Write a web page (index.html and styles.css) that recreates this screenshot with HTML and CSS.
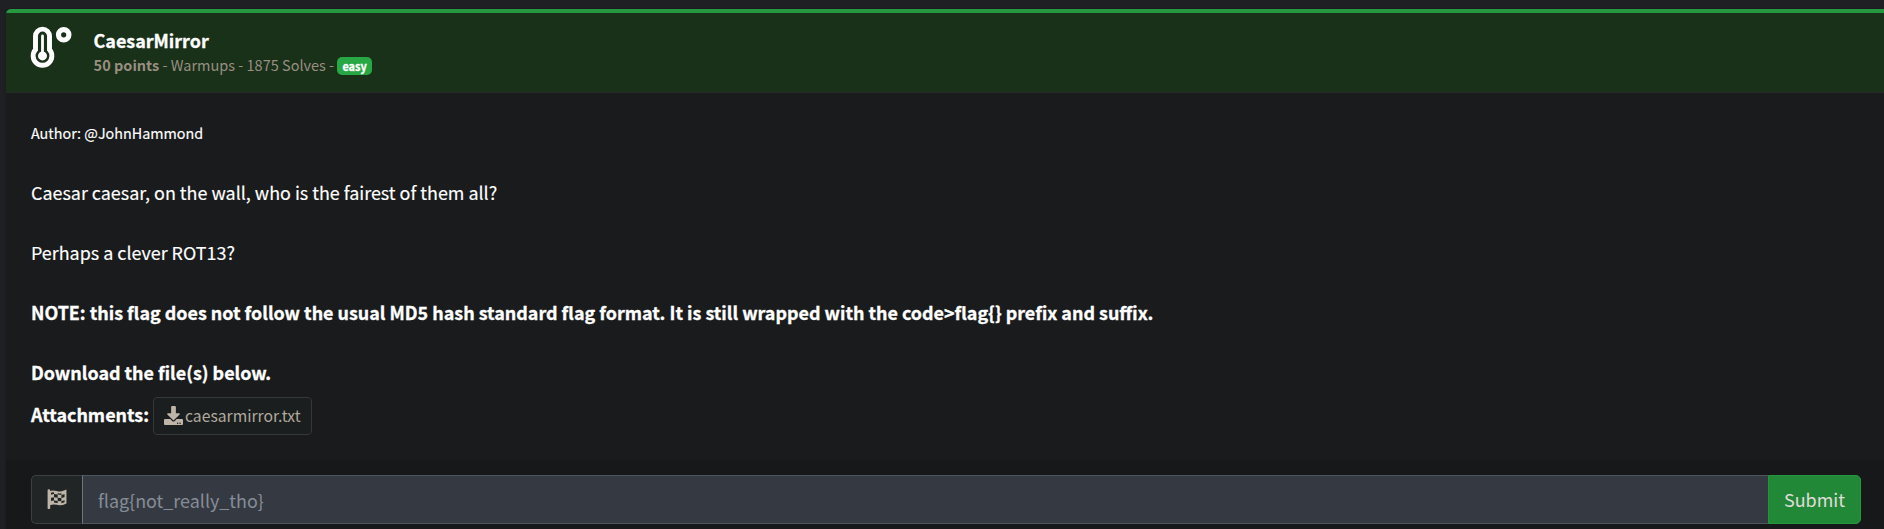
FILE: index.html
```html
<!DOCTYPE html>
<html lang="en">
<head>
<meta charset="utf-8">
<title>CaesarMirror</title>
<link rel="stylesheet" href="styles.css">
</head>
<body>
<main class="card">
  <header class="card-header">
    <svg class="thermo" viewBox="0 0 42 42" aria-hidden="true">
      <path d="M5.500 23.700V10.100a7 7 0 0 1 14 0V23.700a9.350 9.350 0 1 1-14 0z" fill="none" stroke="#fff" stroke-width="4.900"/>
      <path d="M12.500 10v20" stroke="#fff" stroke-width="2.800" stroke-linecap="round"/>
      <circle cx="12.500" cy="29.900" r="4.500" fill="#fff"/>
      <circle cx="33.700" cy="8.800" r="5.200" fill="none" stroke="#fff" stroke-width="5.200"/>
    </svg>
    <div class="heading">
      <h1 class="title">CaesarMirror</h1>
      <p class="meta"><b>50 points</b> - Warmups - 1875 Solves - <span class="badge">easy</span></p>
    </div>
  </header>
  <section class="card-body">
    <p class="author">Author: @JohnHammond</p>
    <p class="text">Caesar caesar, on the wall, who is the fairest of them all?</p>
    <p class="text">Perhaps a clever ROT13?</p>
    <p class="text strong">NOTE: this flag does not follow the usual MD5 hash standard flag format. It is still wrapped with the code&gt;flag{} prefix and suffix.</p>
    <p class="text strong last">Download the file(s) below.</p>
    <div class="attachments">
      <span class="strong label">Attachments:</span>
      <a class="file">
        <svg class="download" viewBox="0 0 512 512" aria-hidden="true"><path fill="currentColor" fill-rule="evenodd" d="M216 0h80c13 0 24 11 24 24v168h88c18 0 27 21 14 34L270 378c-7 7-20 7-28 0L90 226c-13-13-4-34 14-34h88V24c0-13 11-24 24-24zm296 376v112c0 13-11 24-24 24H24c-13 0-24-11-24-24V376c0-13 11-24 24-24h147l49 49c20 20 52 20 72 0l49-49h147c13 0 24 11 24 24zM388 464a20 20 0 1 0-40 0 20 20 0 0 0 40 0zm64 0a20 20 0 1 0-40 0 20 20 0 0 0 40 0z"/></svg>
        <span>caesarmirror.txt</span>
      </a>
    </div>
  </section>
  <footer class="card-footer">
    <div class="prepend">
      <svg class="flag" viewBox="0 0 20 20" aria-hidden="true">
        <path d="M1.900 1.500V19" stroke="currentColor" stroke-width="2.600" stroke-linecap="round"/>
        <path d="M3 3.100C7 .8 9.600 3.800 13 3.500c2.200-.2 3.800-1 5.500-1.700v12c-2.200 1.100-4 1.700-6 1.500-3.200-.4-5.500-1.900-9.500-.1z" fill="none" stroke="currentColor" stroke-width="1.900"/>
        <path fill="currentColor" d="M3.500 5.800l3.500-.8v3.200l-3.500.8zM7 8.200l3.700.6v3.200L7 11.400zM10.700 5.600l3.700.3v3.200l-3.700-.3zM14.400 9.100l3.800-1.200v3.200l-3.800 1.200zM3.500 12.100l3.500-.7v2.900l-3.500.7zM10.700 12l3.700.3v3l-3.700-.4zM7 2.500l3.700.5v2.600L7 5zM14.400 3.500l3.700-1v2.400l-3.700 1z"/>
      </svg>
    </div>
    <input class="answer" type="text" placeholder="flag{not_really_tho}">
    <button class="submit" type="button">Submit</button>
  </footer>
</main>
</body>
</html>
```
FILE: styles.css
```css
* { box-sizing: border-box; }
body {
  margin: 0;
  padding: 9px 0 0 6px;
  height: 529px;
  overflow: hidden;
  background: #1e2023;
  color: #fff;
  font-family: "Noto Sans CJK SC", "Noto Sans", sans-serif;
  font-size: 17.92px;
}
h1, p { margin: 0; white-space: nowrap; }
.card {
  height: 540px;
  background: #191b1c;
  border-top: 4px solid #26983f;
  border-top-left-radius: 5px;
  box-shadow: 0 0 2px rgba(0, 0, 0, .3);
}
.card-header {
  display: flex;
  height: 80px;
  padding: 13px 25px 0 24px;
  background: #193019;
  border-bottom: 1px solid #252c25;
}
.thermo { width: 42px; height: 42px; flex: none; }
.heading { padding: 2px 0 0 21.6px; }
.title { font-size: 17.92px; line-height: 24px; font-weight: 700; -webkit-text-stroke: .3px; }
.meta { font-size: 14.5px; line-height: 24px; margin-top: 1px; color: #988f81; }
.badge {
  display: inline-block;
  height: 18px;
  padding: 0 5px;
  border-radius: 5px;
  background: #28a745;
  color: #fff;
  font-size: 10.9px;
  line-height: 18px;
  font-weight: 700;
  -webkit-text-stroke: .3px;
}
.card-body { height: 367px; padding: 28px 25px 0; }
.author { font-size: 14.35px; line-height: 24px; margin-bottom: 32px; -webkit-text-stroke: .15px; }
.text { line-height: 30px; margin-bottom: 30px; -webkit-text-stroke: .15px; }
.text.last { margin-bottom: 10px; }
.strong { font-weight: 700; -webkit-text-stroke: .3px; }
.attachments { display: flex; gap: 4px; }
.label { line-height: 34px; }
.file {
  display: flex;
  align-items: center;
  width: 159px;
  height: 38px;
  padding-left: 10px;
  gap: 2px;
  border: 1px solid #343839;
  border-radius: 4px;
  background: #1a1e1e;
  color: #b1a99d;
  font-size: 15.7px;
  line-height: 36px;
}
.download { width: 19px; height: 19px; margin-top: -2px; flex: none; color: #beb5a8; }
.card-footer { display: flex; height: 69px; padding: 15px 23px 0 25px; background: #161819; }
.prepend {
  display: flex;
  align-items: center;
  justify-content: center;
  width: 51px;
  height: 49px;
  border: 1px solid #3b4042;
  border-right: 0;
  border-radius: 5px 0 0 5px;
  background: #212525;
  color: #beb5a8;
}
.flag { width: 20px; height: 20px; margin-top: -2px; }
.answer {
  flex: 1;
  height: 49px;
  padding: 0 15px;
  border: 1px solid #4c565e;
  border-left-color: #6c7780;
  border-right: 0;
  border-radius: 0;
  background: #353a42;
  color: #fff;
  font: inherit;
  line-height: 47px;
}
.answer::placeholder { color: #858d98; opacity: 1; }
.submit {
  width: 93px;
  height: 49px;
  padding: 0 0 2px;
  border: 1px solid #26963e;
  border-radius: 0 5px 5px 0;
  background: #218838;
  color: #e0ded9;
  font: inherit;
}
```
